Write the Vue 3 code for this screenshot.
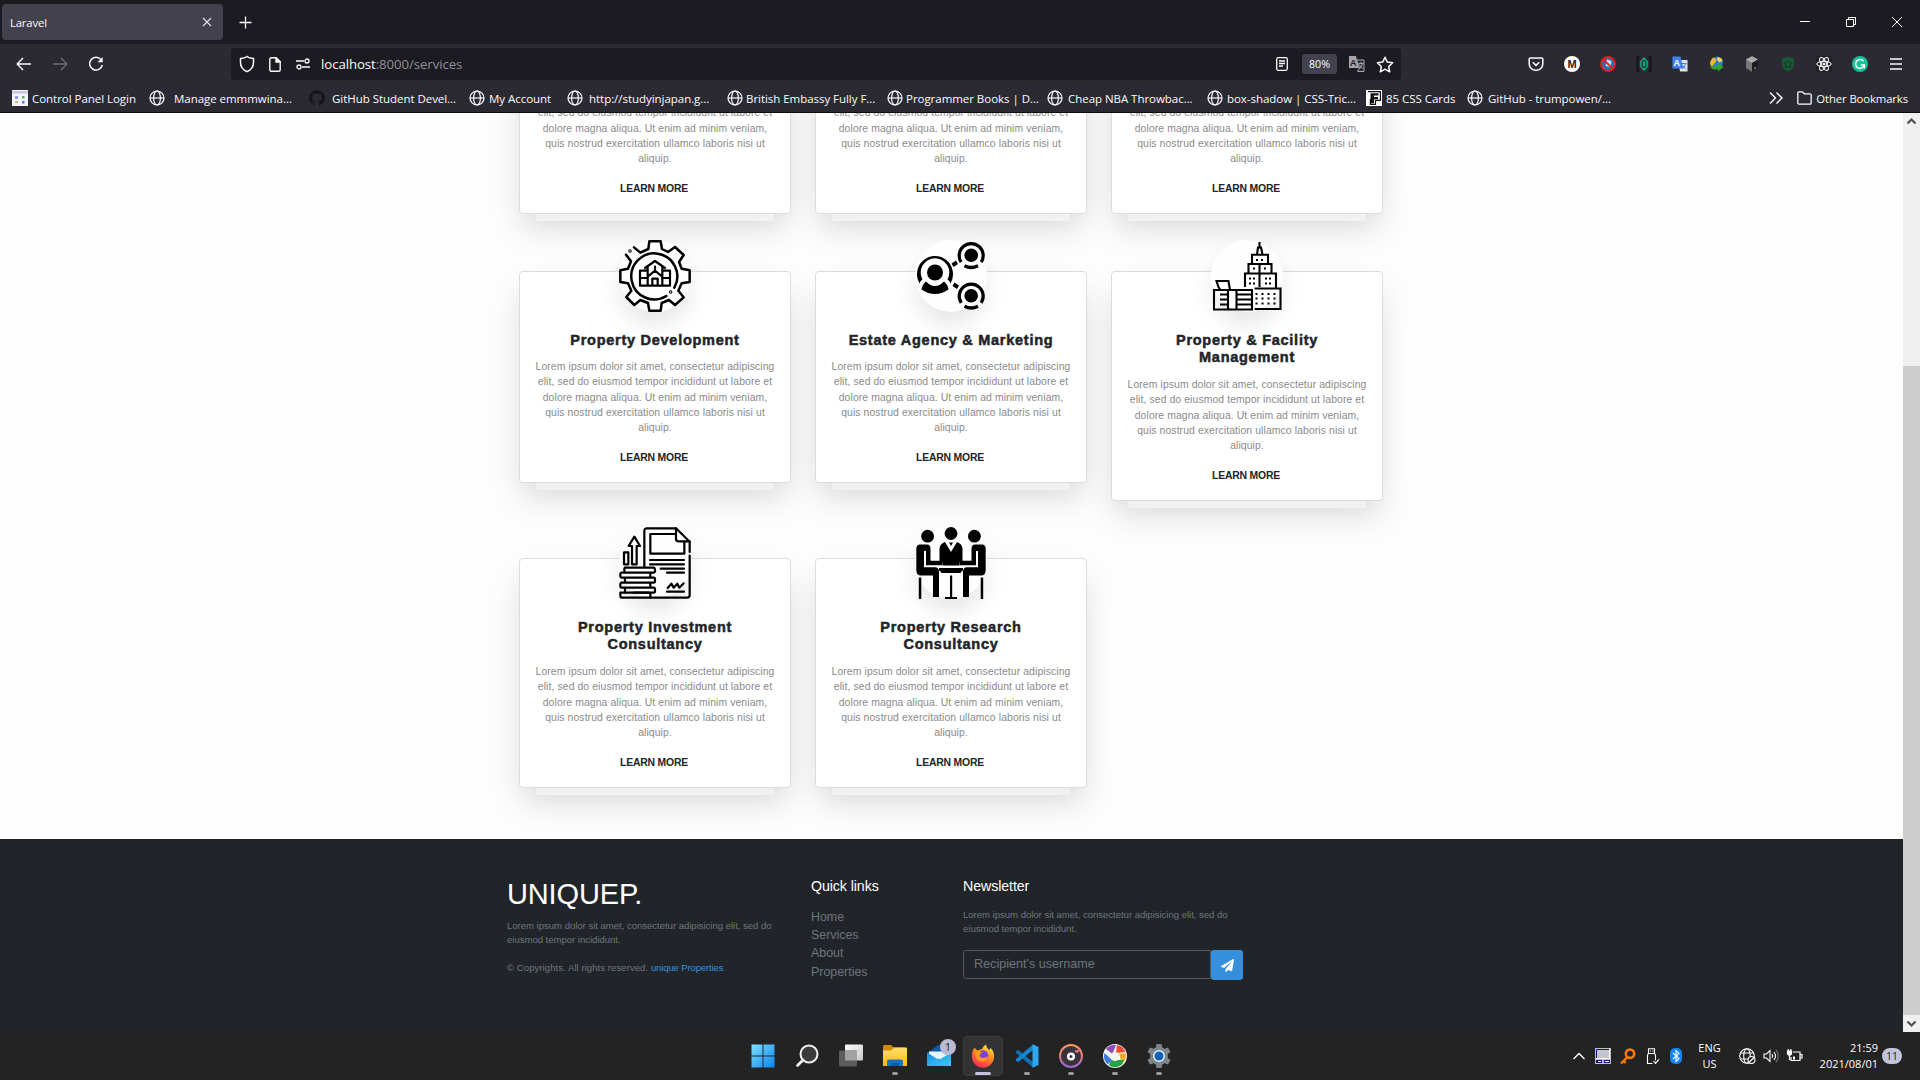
<script setup>
const bookmarks = [
  { icon: 'panel', text: 'Control Panel Login', width: 137, gap: 4 },
  { icon: 'globe', text: 'Manage emmmwina...', width: 160, gap: 9 },
  { icon: 'github', text: 'GitHub Student Devel...', width: 160, gap: 7 },
  { icon: 'globe', text: 'My Account', width: 98, gap: 4 },
  { icon: 'globe', text: 'http://studyinjapan.g...', width: 159.5, gap: 6 },
  { icon: 'globe', text: 'British Embassy Fully F...', width: 160, gap: 3.500 },
  { icon: 'globe', text: 'Programmer Books | D...', width: 160, gap: 3.500 },
  { icon: 'globe', text: 'Cheap NBA Throwbac...', width: 160, gap: 5.500 },
  { icon: 'globe', text: 'box-shadow | CSS-Tric...', width: 159.5, gap: 4.500 },
  { icon: 'cards', text: '85 CSS Cards', width: 101, gap: 4 },
  { icon: 'globe', text: 'GitHub - trumpowen/...', width: 160, gap: 5 },
]
const extensions = ['pocket', 'medium', 'blocked', 'json', 'translate', 'idm', 'cube', 'guard', 'react', 'grammarly', 'menu']
const lorem = ['Lorem ipsum dolor sit amet, consectetur adipiscing', 'elit, sed do eiusmod tempor incididunt ut labore et', 'dolore magna aliqua. Ut enim ad minim veniam,', 'quis nostrud exercitation ullamco laboris nisi ut', 'aliquip.']
const scrolled = lorem.slice(1)
const cards = [
  { title: [], body: scrolled }, { title: [], body: scrolled }, { title: [], body: scrolled },
  { icon: 'gear', title: ['Property Development'], body: lorem },
  { icon: 'network', title: ['Estate Agency & Marketing'], body: lorem },
  { icon: 'building', title: ['Property & Facility', 'Management'], body: lorem },
  { icon: 'invest', title: ['Property Investment', 'Consultancy'], body: lorem },
  { icon: 'meeting', title: ['Property Research', 'Consultancy'], body: lorem },
]
const links = ['Home', 'Services', 'About', 'Properties']
const apps = ['windows', 'search', 'taskview', 'explorer', 'mail', 'firefox', 'vscode', 'disc', 'picasa', 'settings']
const running = ['explorer', 'vscode', 'disc', 'picasa', 'settings']
</script>

<template>
  <div class="screen">
    <svg class="defs" width="0" height="0">
      <defs>
        <linearGradient id="gw" x1="0" y1="0" x2="1" y2="1"><stop offset="0" stop-color="#7fe0ff" /><stop offset="1" stop-color="#0a84f0" /></linearGradient>
        <linearGradient id="gf" x1="0" y1="0" x2="0" y2="1"><stop offset="0" stop-color="#ffdf6b" /><stop offset="1" stop-color="#fdb913" /></linearGradient>
        <linearGradient id="gt" x1="0" y1="0" x2="1" y2="1"><stop offset="0" stop-color="#fff" /><stop offset="1" stop-color="#c8c8c8" /></linearGradient>
        <linearGradient id="gm" x1="0" y1="0" x2="1" y2="1"><stop offset="0" stop-color="#1490df" /><stop offset="1" stop-color="#3fc9f7" /></linearGradient>
        <linearGradient id="gx" x1=".8" y1="0" x2=".3" y2="1"><stop offset="0" stop-color="#fff04a" /><stop offset=".45" stop-color="#ff8a1e" /><stop offset="1" stop-color="#ff2257" /></linearGradient>
        <linearGradient id="gd" x1="0" y1="0" x2="0" y2="1"><stop offset="0" stop-color="#ff9a5c" /><stop offset=".5" stop-color="#e07a80" /><stop offset="1" stop-color="#a066e0" /></linearGradient>
      </defs>
      <symbol id="b-globe" viewBox="0 0 16 16"><g fill="none" stroke="#fbfbfe" stroke-width="1.2"><circle cx="8" cy="8" r="7" /><ellipse cx="8" cy="8" rx="3.4" ry="7" /><path d="M1 8h14" /></g></symbol>
      <symbol id="b-panel" viewBox="0 0 16 16"><path fill="#f4f4fa" d="M0 0h16v16H0z" /><path fill="#c9c4ea" d="M0 1h16v2.600H0z" /><path fill="#8fa3dc" d="M3 6h3v3H3zM4 11h2v2H4z" /><path fill="#55b45a" d="M10 6h2.500v2.500H10z" /><path fill="#f2bf4e" d="M3 11h2v2H3z" /><path fill="#4f83d8" d="M10 11h2.500v2.500H10z" /></symbol>
      <symbol id="b-github" viewBox="0 0 16 16"><path fill="#15141a" d="M8 .2a7.800 7.800 0 0 0-2.500 15.200c.4.100.5-.2.500-.4v-1.500c-2.200.5-2.600-1-2.600-1-.4-.9-.9-1.200-.9-1.200-.7-.5.100-.5.100-.5.800.100 1.200.8 1.200.8.700 1.200 1.800.9 2.300.7 0-.5.300-.9.500-1-1.700-.2-3.600-.9-3.600-3.900 0-.9.300-1.600.8-2.100-.1-.2-.3-1 .1-2.100 0 0 .7-.2 2.100.8a7.500 7.500 0 0 1 4 0c1.500-1 2.100-.8 2.100-.8.400 1.100.2 1.900.100 2.100.5.500.8 1.200.8 2.100 0 3-1.800 3.700-3.600 3.900.3.200.6.700.6 1.400V15c0 .2.100.5.500.4A7.800 7.800 0 0 0 8 .2z" /></symbol>
      <symbol id="b-cards" viewBox="0 0 16 16"><path fill="#fff" d="M0 0h16v16H0z" /><path fill="none" stroke="#111" stroke-width="1.200" d="M2 1.600h12.400v8.800H9.500v4H4.400V9" /><path fill="#111" d="M4.500 3.200h8v2.400H8v1.300h4v2.300H8v4H4.500z" /></symbol>
    </svg>

    <header class="chrome">
      <div class="tabbar">
        <div class="tab"><span class="tab-title">Laravel</span>
          <svg width="10" height="10" viewBox="0 0 10 10"><path d="M1 1l8 8M9 1L1 9" stroke="#e4e4ea" stroke-width="1.100" /></svg>
        </div>
        <svg class="plus" width="13" height="13" viewBox="0 0 13 13"><path d="M6.500 .5v12M.5 6.500h12" stroke="#fbfbfe" stroke-width="1.300" /></svg>
        <div class="wincontrols">
          <svg width="10" height="10"><path d="M0 4.500h10" stroke="#fff" /></svg>
          <svg width="10" height="10" fill="none" stroke="#fff"><path d="M.5 2.500h7v7h-7zM2.500 2.500V.5h7v7h-2" /></svg>
          <svg width="10" height="10"><path d="M0 0l10 10M10 0L0 10" stroke="#fff" /></svg>
        </div>
      </div>

      <div class="nav">
        <div class="history">
          <svg width="16" height="16" viewBox="0 0 16 16" fill="none" stroke="#fbfbfe" stroke-width="1.400"><path d="M15 8H1.500M7 2L1.200 8 7 14" /></svg>
          <svg width="16" height="16" viewBox="0 0 16 16" fill="none" stroke="#6d6c74" stroke-width="1.400"><path d="M1 8h13.500M9 2l5.800 6L9 14" /></svg>
          <svg width="16" height="16" viewBox="0 0 16 16" fill="none" stroke="#fbfbfe" stroke-width="1.500"><path d="M13 3.600A6.400 6.400 0 1 0 14.300 9" /><path d="M14.700 1v5.200H9.500z" fill="#fbfbfe" stroke="none" /></svg>
        </div>
        <div class="urlbar">
          <svg width="16" height="18" viewBox="0 0 16 18" fill="none" stroke="#fbfbfe" stroke-width="1.500"><path d="M8 1.500C6 3.200 3.800 3.400 1.500 3.600v4c0 4.500 3 7.600 6.500 9 3.500-1.400 6.500-4.500 6.500-9v-4C12.200 3.400 10 3.200 8 1.500z" /></svg>
          <svg width="12" height="15" viewBox="0 0 12 15" fill="none" stroke="#fbfbfe" stroke-width="1.400"><path d="M7.200.8H2.300Q.8.8.8 2.300v10.400q0 1.500 1.500 1.500h7.400q1.500 0 1.500-1.500V4.800z" /><path d="M7 .8v4.300h4.300z" fill="#fbfbfe" /></svg>
          <svg width="14" height="12" viewBox="0 0 14 12" fill="none" stroke="#fbfbfe" stroke-width="1.300"><path d="M0 3h8M6 9h8" /><circle cx="11" cy="3" r="2" /><circle cx="3" cy="9" r="2" /></svg>
          <span class="url">localhost<i>:8000/services</i></span>
          <div class="urlactions">
            <svg width="14" height="14" viewBox="0 0 14 14" fill="none" stroke="#fbfbfe" stroke-width="1.300"><rect x="1.700" y=".7" width="10.600" height="12.600" rx="1.500" /><path d="M4 4h6M4 6.500h6M4 9h4" /></svg>
            <span class="zoom">80%</span>
            <svg width="16" height="16" viewBox="0 0 16 16"><path d="M0 0h7l3 12H0z" fill="#a5a4aa" /><path d="M7.500 4H15v11.500H8.500l2-3.500z" fill="#2b2a33" stroke="#a5a4aa" /><text x="1" y="9.500" font-size="9" font-weight="700" fill="#1c1b22" font-family="Liberation Sans, sans-serif">A</text><path d="M9.500 7.500h5M12 6v1.500m1.500 0q-1 3.500-3 5m-.2-4q1 2.500 3.200 4" stroke="#a5a4aa" fill="none" /></svg>
            <svg width="18" height="17" viewBox="0 0 18 17" fill="none" stroke="#fbfbfe" stroke-width="1.500" stroke-linejoin="round"><path d="M9 1.200l2.300 4.900 5.300.700-3.900 3.700 1 5.300L9 13.200l-4.700 2.600 1-5.300L1.400 6.800l5.300-.7z" /></svg>
          </div>
        </div>
        <div class="extensions">
          <div v-for="e in extensions" :key="e" class="ext">
            <svg width="16" height="16" viewBox="0 0 16 16">
              <g v-if="e === 'pocket'" fill="none" stroke="#fbfbfe" stroke-width="1.500"><path d="M2.500 2h11q1.300 0 1.300 1.300V8a6.800 6.300 0 0 1-13.600 0V3.300Q1.200 2 2.500 2z" /><path d="M4.800 6.300L8 9.400l3.200-3.100" /></g>
              <g v-else-if="e === 'medium'"><circle cx="8" cy="8" r="8" fill="#fff" /><text x="8" y="12" text-anchor="middle" font-size="11" font-weight="700" fill="#222" font-family="Liberation Sans, sans-serif">M</text></g>
              <g v-else-if="e === 'blocked'"><circle cx="8" cy="8" r="6.500" fill="#2e6fae" /><path d="M7 3.500l4.500 1.500-1 6-5-1z" fill="#c9e6f7" /><g fill="none" stroke="#f01818" stroke-width="1.900"><circle cx="8" cy="8" r="7" /><path d="M3.300 3.300l9.400 9.400" /></g></g>
              <g v-else-if="e === 'json'"><path d="M3.500 1H1.500v14h2M12.500 1h2v14h-2" fill="none" stroke="#101014" stroke-width="1.500" /><path d="M8 1l3.800 4.500v5L8 15l-3.800-4.500v-5z" fill="#15b789" /><ellipse cx="8" cy="8" rx="1.800" ry="3.600" fill="none" stroke="#14332e" stroke-width="1.400" /></g>
              <g v-else-if="e === 'translate'"><path d="M6 4h9.500v11.500H8z" fill="#dfe3ea" /><path d="M.5.5h8l3 12H.5z" fill="#3f83f0" /><text x="1.500" y="9.500" font-size="9" font-weight="700" fill="#fff" font-family="Liberation Sans, sans-serif">A</text><path d="M9.500 7.500h5M13.500 8q-1 3-3 4.500m0-3l3 3.500" stroke="#4b76c9" fill="none" /></g>
              <g v-else-if="e === 'idm'"><circle cx="9" cy="6.500" r="6" fill="#2f78d0" /><path d="M5 1.500q5 1.500 2.500 4.500T4 11Q-.5 7 5 1.500z" fill="#e7bd2a" /><path d="M10 1q4 .5 4.500 4l-3 1.500-3-3z" fill="#efd44d" /><path d="M2 10q3 1.500 8-1V6.500l5.500 4.500-5.500 4.500V13q-6 2-8-3z" fill="#32a52c" /></g>
              <g v-else-if="e === 'cube'"><path d="M8 .3l6 3.300v8.600L8 15.700 2 12.200V3.600z" fill="#777" /><path d="M8 .3l6 3.300L8 7 2 3.600z" fill="#aaa" /><path d="M8 7l6-3.400v8.600l-6 3.500z" fill="#1c1c1c" /><path d="M10 12.500l2-1" stroke="#bbb" /></g>
              <g v-else-if="e === 'guard'"><path d="M8 .8q3 1.500 6 1.500V8q0 5-6 7.300Q2 13 2 8V2.300q3 0 6-1.500z" fill="#1b5838" /><path d="M8 4l1.200 2.700 2.800.3-2 2 .6 2.900L8 10.500l-2.600 1.400L6 9 4 7l2.800-.3z" fill="none" stroke="#0e3b25" /></g>
              <g v-else-if="e === 'react'" fill="none" stroke="#fff" stroke-width="1"><rect width="16" height="16" rx="2" fill="#202124" stroke="none" /><ellipse cx="8" cy="8" rx="7.200" ry="2.700" /><ellipse cx="8" cy="8" rx="7.200" ry="2.700" transform="rotate(60 8 8)" /><ellipse cx="8" cy="8" rx="7.200" ry="2.700" transform="rotate(120 8 8)" /><circle cx="8" cy="8" r="1" fill="#fff" /></g>
              <g v-else-if="e === 'grammarly'"><circle cx="8" cy="8" r="8" fill="#15c39a" /><path d="M11.500 5.200A4.400 4.400 0 1 0 12.300 9H8.800M12.300 9v3" fill="none" stroke="#fff" stroke-width="1.500" /></g>
              <path v-else d="M2 3h12M2 8h12M2 13h12" stroke="#fbfbfe" stroke-width="1.400" />
            </svg>
          </div>
        </div>
      </div>

      <div class="bookmarks">
        <div v-for="b in bookmarks" :key="b.text" class="bookmark" :style="{ width: b.width + 'px', gap: b.gap + 'px' }">
          <svg width="16" height="16"><use :href="'#b-' + b.icon" /></svg><span>{{ b.text }}</span>
        </div>
        <div class="other">
          <svg width="14" height="12" viewBox="0 0 14 12" fill="none" stroke="#fbfbfe" stroke-width="1.400"><path d="M1 .5L6.500 6 1 11.500M7.500.5L13 6l-5.500 5.500" /></svg>
          <svg class="folder" width="15" height="14" viewBox="0 0 15 14" fill="none" stroke="#fbfbfe" stroke-width="1.300"><path d="M.8 2Q.8.800 2 .8h3.300l2 2H13q1.200 0 1.200 1.200v8q0 1.200-1.200 1.200H2Q.8 13.200.8 12z" /></svg>
          <span>Other Bookmarks</span>
        </div>
      </div>
    </header>

    <div class="viewport">
      <div class="page">
        <main class="grid">
          <article v-for="(c, i) in cards" :key="i" class="card" :class="{ tall: c.title.length > 1 }">
            <div v-if="c.icon" class="badge">
              <svg v-if="c.icon === 'gear'" width="72" height="72" viewBox="0 0 216 216" fill="none" stroke="#000" stroke-width="7.500" stroke-linecap="round" stroke-linejoin="round">
                <path d="M45 22L64 38 88 27 91 4H125L129 27 147 36 168 21 194 45 180 66 188 86 212 91V126L188 130 178 152 194 172 168 195 150 180 128 189 125 212H91L87 189 64 180 46 195 22 171 37 152 27 130 4 126V91L27 86 36 64 21 44" />
                <path d="M166 143A69 69 0 1 0 142 168" /><circle cx="33" cy="33" r="1.500" /><circle cx="155" cy="156" r="1.500" />
                <path d="M63 92h23M130 92h23v45H63V92M63 114h24M129 114h24M78 84L108 63l30 21M86 82v55M130 82v55M90 107l18-15 18 15M100 136v-20h16v20M108 80v8" stroke-width="6.500" />
              </svg>
              <svg v-else-if="c.icon === 'network'" width="72" height="72" viewBox="0 0 72 72">
                <circle cx="20" cy="32.500" r="8" />
                <path d="M4.500 43.500A18 18.200 0 1 1 35.500 43.500Q34.500 40.500 32.500 39.500A14.300 14.300 0 1 0 7.500 39.500Q5.500 40.500 4.500 43.500z" />
                <path d="M11 41.500Q20 50.500 29 41.500Q32.500 44 33.500 49.500Q20 58.500 6.500 49.500Q7.500 44 11 41.500z" />
                <path d="M36.500 23.500l4.500-3 2 3.500-4.500 3zM39.500 42.500l4.500 3-2 3.500-4.500-3z" />
                <g v-for="y in [15.200, 55.800]" :key="y" :transform="`translate(56.2 ${y})`"><circle r="6.800" /><path d="M-10 7A12 12 0 1 1 10 7" fill="none" stroke="#000" stroke-width="3.200" /><path d="M-6 9Q0 12 6 9L7.500 12Q0 16-7.500 12z" /></g>
              </svg>
              <svg v-else-if="c.icon === 'building'" width="72" height="72" viewBox="0 0 72 72" fill="none" stroke="#000" stroke-width="2.100">
                <path d="M48.500 2v6M46 14.500l1-7h3l1.500 7M41 24v-9.300h16V24M37.500 33.300V24h23v9.300M34 47V33.500h31V48M48.500 24v23M43.600 48.500H69.500v20.500H43.600M3 69.500V50H41v19.500zM17 50v19.500M25.500 50v19.500M19 50L17.500 41H5.500l2 6 2 3" />
                <path d="M9 54.500h8M9 59.500h8M9 64.500h8M25 54.500h15M25 59.500h15M25 64.500h15" />
                <path d="M45 20h2m3 0h2M42 28.500h2m9 0h2M38 38.500h2m2 0h2m10 0h2m2 0h2M38 43.500h2m2 0h2m10 0h2m2 0h2M44.500 54h2m4 0h2m4 0h2m4 0h2M44.500 58.500h2m4 0h2m4 0h2m4 0h2M44.500 63.500h2m4 0h2m4 0h2m4 0h2" />
              </svg>
              <svg v-else-if="c.icon === 'invest'" width="72" height="72" viewBox="0 0 216 216" fill="none" stroke="#000" stroke-width="6.600" stroke-linecap="round" stroke-linejoin="round">
                <path d="M76 119V12Q76 4 84 4H171L212 44V75M212 86V204Q212 212 204 212H8Q4 212 4 206V197H90" />
                <path d="M171 4V36Q171 43 179 43H212M168 21H94V80H196V46M93 99H195M93 112H195M125 125H195M144 137H195M146 183L157 170 164 182 175 170 181 182 194 169M144 194H195" />
                <path d="M18 122H102Q108 122 108 128V133Q108 137 102 137H20Q16 137 16 132V127Q16 122 20 122M8 137H94M8 137Q4 137 4 143V148Q4 152 8 152H104Q108 152 108 157V162Q108 167 104 167H8Q4 167 4 173V177Q4 182 8 182H104Q108 182 108 188V192Q108 197 104 197H44M18 152V167M18 182V197M94 137V152M94 167V182M94 197V212" />
                <path d="M15 112V76H28V112zM39 112V57H29L46 29 63 57H53V112z" />
              </svg>
              <svg v-else width="72" height="72" viewBox="0 0 72 72">
                <circle cx="12.600" cy="9.200" r="6.400" /><circle cx="36" cy="6.500" r="6.400" /><circle cx="59.400" cy="9.200" r="6.400" />
                <path d="M30 15L36 25 42 15Q47.500 17 47.500 22V34H45L44.500 38.500H27.500L27 34H24.500V22Q24.500 17 30 15zM34 15.500h4L36 19z" />
                <g id="seat"><path d="M5 17.500H12Q15.500 17.500 15.500 22V33.700H27V38.300H11V24H9V40.300H20Q24 40.300 24 45V70H18V48.500H6Q1.300 48.500 1.300 43V22Q1.300 17.500 5 17.500zM3.800 50.500h2.500V72H3.800z" /></g>
                <use href="#seat" transform="translate(72 0) scale(-1 1)" />
                <path d="M24 41H48V43.500Q46 44 45.500 46H26.500Q26 44 24 43.500zM35 48.500h2.200V70H42v2H30v-2h5z" />
              </svg>
            </div>
            <h4 v-if="c.title.length"><span v-for="t in c.title" :key="t">{{ t }}</span></h4>
            <p><span v-for="l in c.body" :key="l">{{ l }}</span></p>
            <a class="more">LEARN MORE</a>
          </article>
        </main>

        <footer>
          <section class="brand">
            <h2>UNIQUEP.</h2>
            <p>Lorem ipsum dolor sit amet, consectetur adipisicing elit, sed do<br>eiusmod tempor incididunt.</p>
            <p class="copy">© Copyrights. All rights reserved. <a>unique Properties</a></p>
          </section>
          <section class="quick">
            <h5>Quick links</h5>
            <ul><li v-for="l in links" :key="l">{{ l }}</li></ul>
          </section>
          <section class="news">
            <h5>Newsletter</h5>
            <p>Lorem ipsum dolor sit amet, consectetur adipisicing elit, sed do<br>eiusmod tempor incididunt.</p>
            <div class="field">
              <div class="input">Recipient's username</div>
              <div class="send"><svg width="13" height="13" viewBox="0 0 512 512"><path fill="#fff" d="M476 3L12 271c-18 10-16 35 2 43l106 45L408 105c5-5 13 2 8 8L175 407v80c0 24 28 33 42 16l64-77 125 52c14 6 30-3 33-18L511 28c3-20-18-34-35-25z" /></svg></div>
            </div>
          </section>
        </footer>
      </div>
      <div class="scrollbar">
        <svg width="17" height="17"><path d="M4.500 10.500l4-4 4 4" fill="none" stroke="#505050" stroke-width="2.200" /></svg>
        <div class="thumb"></div>
        <svg width="17" height="17"><path d="M4.500 6.500l4 4 4-4" fill="none" stroke="#505050" stroke-width="2.200" /></svg>
      </div>
    </div>

    <div class="taskbar">
      <div class="apps">
        <div v-for="a in apps" :key="a" class="app" :class="{ active: a === 'firefox', running: running.includes(a) }">
          <svg width="24" height="24" viewBox="0 0 24 24">
            <path v-if="a === 'windows'" fill="url(#gw)" d="M.5.500h11v11H.5zM12.500.500h11v11h-11zM.5 12.500h11v11H.5zM12.500 12.500h11v11h-11z" />
            <g v-else-if="a === 'search'" fill="none" stroke="#f2f2f2"><circle cx="14" cy="10" r="8.500" stroke-width="2" fill="#3b3b3b" /><path d="M8 16l-5.500 5.500" stroke-width="2.800" stroke-linecap="round" /></g>
            <g v-else-if="a === 'taskview'"><rect x="6" y="0.500" width="18" height="16" rx="1" fill="url(#gt)" /><rect x="0" y="6.500" width="18" height="16" rx="1" fill="#5c5c5c" /><path d="M6 6.500h12v10H6z" fill="#a2a2a2" /></g>
            <g v-else-if="a === 'explorer'"><path d="M0 2.500Q0 1 1.500 1H8l3 2.500h11v4H0z" fill="#d18b00" /><path d="M0 6.500h8l3-3h12q1 0 1 1V22H0z" fill="url(#gf)" /><path d="M4 22v-4.500q0-2 2-2h12q2 0 2 2V22z" fill="#1473c8" /><path d="M8 19h8v3H8z" fill="#0f5aa5" /></g>
            <g v-else-if="a === 'mail'"><path d="M0 9L12 .5 24 9v4H0z" fill="#0f59a8" /><path d="M2 7.500h20v8H2z" fill="#e8f3fa" /><path d="M0 8.500l12 7.500 12-7.500V22H0z" fill="url(#gm)" /><path d="M0 22l12-8 12 8z" fill="#35b8f0" opacity=".6" /></g>
            <g v-else-if="a === 'firefox'"><path d="M3.500 3.500l2.500 3Q9 5.500 11 5q1-3 4-4.500 0 3 3 5.500 2-1 1-2.500 4.500 4 4 9A11 11 0 0 1 1 13Q.5 9 2 6z" fill="url(#gx)" /><circle cx="12" cy="11.500" r="5.200" fill="#7d3fe0" /><path d="M4 8q4-2 8 1-3-.5-3.500 2Q9 14 12 14q3 0 4.500-2 0 5-5 5.500Q3.500 17.500 4 8z" fill="#ff9a25" /></g>
            <g v-else-if="a === 'vscode'"><path d="M1 7.500l2-1.700L18 18v5.500L1 9z" fill="#0f6fb5" /><path d="M1 16.500l2 1.700L18 6V.500L1 15z" fill="#1683cf" /><path d="M17.500.300L23.500 3v18l-6 2.700z" fill="#2fa5f0" /></g>
            <g v-else-if="a === 'disc'"><circle cx="12" cy="12" r="11" fill="#37343a" stroke="url(#gd)" stroke-width="2" /><path d="M16 6.500l2 1.500 3-3" fill="none" stroke="#e07a80" stroke-width="1.800" /><circle cx="12" cy="12.500" r="4" fill="#fff" /><circle cx="12" cy="12.500" r="1.500" fill="#37343a" /></g>
            <g v-else-if="a === 'picasa'"><circle cx="12" cy="12" r="12" fill="#f2f2f2" /><path d="M3 5A11 11 0 0 1 13 1L9.500 10z" fill="#8a4db8" /><path d="M14 1a11 11 0 0 1 8.500 7L13 9z" fill="#ef4a35" /><path d="M23 9.500a11 11 0 0 1-4 10L16 9.500z" fill="#f5ab1e" /><path d="M19 20.500a11 11 0 0 1-13 1L8 16h13z" fill="#27a243" /><path d="M5 20.500A11 11 0 0 1 1.500 9l7.500 7z" fill="#3c7be0" /><circle cx="12" cy="12.500" r="4.500" fill="#f4f4f4" /></g>
            <g v-else><path d="M9.500 0h5l.7 3.500 2.300 1.300L21 3.600l2.500 4.300L20.800 10v4l2.700 2.100-2.500 4.300-3.500-1.200-2.300 1.300-.7 3.500h-5l-.7-3.500-2.300-1.300L3 20.400.5 16.100 3.200 14v-4L.5 7.900 3 3.600l3.500 1.200 2.300-1.300z" fill="#7d868e" /><circle cx="12" cy="12" r="6" fill="#e6eef5" /><circle cx="12" cy="12" r="4.500" fill="#0f62b4" /></g>
          </svg>
          <span v-if="a === 'mail'" class="count">1</span>
        </div>
      </div>
      <div class="tray">
        <svg width="14" height="14" class="up" viewBox="0 0 14 14"><path d="M1.500 10L7 4.500 12.500 10" fill="none" stroke="#fff" stroke-width="1.300" /></svg>
        <svg width="16" height="16" viewBox="0 0 16 16"><path d="M0 0h16v16H0z" fill="#c0c0c0" /><path d="M1.500 1.500h13v9h-13z" fill="#c6c6c6" stroke="#14147a" /><path d="M14.500 1v10M1 10.500h14" stroke="#fff" /><path d="M1 12h6v3H1zM9 12h6v3H9z" fill="#14147a" /><path d="M3 13.500h3M10 13.500h4" stroke="#fff" /></svg>
        <svg width="16" height="16" viewBox="0 0 16 16"><circle cx="10" cy="5.700" r="4.200" fill="none" stroke="#ff7a00" stroke-width="2.600" /><path d="M7.500 9L1 15.500M3 12l2.500 3" stroke="#ff7a00" stroke-width="2.400" /></svg>
        <svg width="14" height="17" viewBox="0 0 14 17" fill="none" stroke="#fff" stroke-width="1.100"><path d="M2.500 5.500V.700h6v4.800M6.500 15.500h-5v-8q0-2 2-2h4q2 0 2 2v5M4 3h1m1.500 0h1M7.500 13l2 2.300 3.500-4" /></svg>
        <svg width="12" height="16" viewBox="0 0 12 16"><rect width="12" height="16" rx="5" fill="#0a84ff" /><path d="M3 5l6 5.500L6 13.500v-11L9 5.500 3 11" fill="none" stroke="#fff" stroke-width="1.100" /></svg>
        <div class="lang"><span>ENG</span><span>US</span></div>
        <svg width="17" height="16" viewBox="0 0 17 16" fill="none" stroke="#fff" stroke-width="1.100"><circle cx="8" cy="8" r="7.300" /><ellipse cx="8" cy="8" rx="3.300" ry="7.300" /><path d="M1.500 5h13M1.500 11h8" /><circle cx="12.500" cy="12" r="3.500" fill="#252526" /><path d="M10 14.500l5-5" /></svg>
        <svg width="16" height="14" viewBox="0 0 16 14" fill="none" stroke="#fff" stroke-width="1.100"><path d="M1 5h2.500L7 1.500v11L3.500 9H1zM9 5q1.500 2 0 4M11 3q3 4 0 8" /><path d="M13 1q4.500 6 0 12" stroke="#777" /></svg>
        <svg width="17" height="14" viewBox="0 0 17 14" fill="none" stroke="#fff" stroke-width="1.200"><path d="M7 3h7v8.500H5V8M14.500 5.500H16v3.500h-1.500" /><path d="M1.500 2h4v3q-2 2-4 0zM2.200 0v2M4.800 0v2" fill="#fff" /><path d="M3.500 6v5" /><path d="M7 9h2" stroke-width="3" /></svg>
        <div class="clock"><span>21:59</span><span>2021/08/01</span></div>
        <span class="notes">11</span>
      </div>
    </div>
  </div>
</template>

<style>
html, body { margin: 0; overflow: hidden; }
</style>

<style scoped>
* { box-sizing: border-box; }
svg { display: block; flex: none; }
.screen { width: 1920px; height: 1080px; display: flex; flex-direction: column; font-family: "Open Sans", "Noto Sans", sans-serif; overflow: hidden; }
.defs { position: absolute; }
.chrome { height: 113px; background: #2b2a33; border-bottom: 1px solid #0c0c0d; color: #fbfbfe; flex: none; }
.tabbar { height: 44px; background: #1c1b22; display: flex; align-items: center; padding-left: 2px; }
.tab { width: 221px; height: 36px; border-radius: 4px; background: #42414d; display: flex; align-items: center; justify-content: space-between; padding: 0 11px 0 8px; font-size: 11.300px; }
.tab-title { letter-spacing: -.15px; }
.plus { margin-left: 16px; }
.wincontrols { margin-left: auto; display: flex; gap: 36px; padding-right: 18px; }
.nav { height: 40px; display: flex; align-items: center; }
.history { width: 231px; display: flex; gap: 20px; padding-left: 16px; }
.urlbar { width: 1170px; height: 32px; background: #1c1b22; border-radius: 4px; display: flex; align-items: center; padding: 0 7px 0 8px; }
.urlbar > svg:nth-child(2) { margin-left: 14px; }
.urlbar > svg:nth-child(3) { margin-left: 15px; }
.url { margin-left: 11px; font-size: 13.200px; letter-spacing: -.06px; }
.url i { font-style: normal; color: #8f8f95; }
.urlactions { margin-left: auto; display: flex; align-items: center; }
.zoom { width: 35px; height: 20px; line-height: 20px; background: #42414d; border-radius: 3px; font-size: 10.700px; letter-spacing: -.1px; text-align: center; margin: 0 12px 0 13px; }
.urlactions > svg:last-child { margin-left: 11px; }
.extensions { margin-left: 117px; display: flex; }
.ext { width: 36px; display: flex; justify-content: center; }
.bookmarks { height: 28px; display: flex; align-items: center; padding-left: 12px; font-size: 11.500px; letter-spacing: -.04px; white-space: nowrap; }
.bookmark { display: flex; align-items: center; flex: none; }
.other { margin-left: auto; display: flex; align-items: center; padding-right: 12px; font-size: 11.300px; letter-spacing: -.1px; }
.folder { margin: 0 4px 0 14px; }

.viewport { height: 919px; display: flex; overflow: hidden; flex: none; }
.page { width: 1903px; background: #fdfdfd; font-family: "Liberation Sans", Arial, sans-serif; display: flex; flex-direction: column; }
.grid { width: 864px; height: 837px; margin: -111px 0 0 519px; display: grid; grid-template-columns: repeat(3, 272px); gap: 57px 24px; align-items: start; align-content: start; flex: none; }
.card { position: relative; min-height: 212px; background: #fff; border: 1px solid #dcdcdc; border-radius: 4px; padding: 0 0 17px; display: flex; flex-direction: column; justify-content: flex-end; align-items: center; text-align: center; box-shadow: 0 17px 30px -5px rgba(0, 0, 0, .16); }
.card.tall { min-height: 230px; }
.card::after { content: ""; position: absolute; left: 16px; right: 16px; bottom: -8px; height: 7px; background: #f1f1f1; }
.badge { position: absolute; top: -32px; left: 99px; width: 72px; height: 72px; border-radius: 50%; background: #fefefe; box-shadow: 0 13px 26px -3px rgba(0, 0, 0, .12); }
.card h4 { margin: 0 0 10px; font-size: 14.500px; line-height: 17px; font-weight: 700; letter-spacing: .73px; color: #212529; -webkit-text-stroke: .5px #212529; }
.card.tall h4 { margin-bottom: 11px; }
.card h4 span, .card p span { display: block; white-space: nowrap; }
.card p { margin: 0 0 14.500px; font-size: 10.400px; line-height: 15.300px; letter-spacing: .1px; color: #8a8a8a; }
.more { font-size: 10.400px; line-height: 15px; font-weight: 700; letter-spacing: -.2px; color: #212529; padding-right: 2px; }

footer { flex: 1; background: #212529; display: flex; padding-left: 507px; color: #6c757d; }
footer p { margin: 0; font-size: 9.600px; line-height: 14px; letter-spacing: -.04px; white-space: nowrap; }
h2 { margin: 38px 0 0; font-size: 29px; line-height: 34px; font-weight: 400; color: #fff; letter-spacing: -.15px; }
.brand { width: 304px; }
.brand p { margin-top: 8px; }
.brand .copy { margin-top: 14px; letter-spacing: .04px; }
.copy a { color: #3490dc; letter-spacing: -.16px; }
h5 { margin: 39px 0 0; font-size: 14.200px; line-height: 17px; font-weight: 400; color: #fff; letter-spacing: -.08px; }
.quick { width: 152px; }
ul { list-style: none; margin: 13px 0 0; padding: 0; font-size: 12.400px; line-height: 18.200px; }
.news p { margin-top: 13px; }
.field { display: flex; margin-top: 14px; }
.input { width: 248px; height: 29px; border: 1px solid #55585c; border-radius: 3px 0 0 3px; padding-left: 10px; font-size: 12.600px; line-height: 26px; }
.send { width: 32px; height: 30px; background: #3490dc; border-radius: 3px; display: flex; align-items: center; justify-content: center; }
.scrollbar { width: 17px; background: #f0f0f0; display: flex; flex-direction: column; }
.thumb { margin-top: 236px; height: 649px; background: #cdcdcd; }

.taskbar { height: 48px; background: #232324; display: flex; color: #fff; position: relative; }
.apps { margin-left: 741px; display: flex; align-items: center; }
.app { position: relative; width: 40px; height: 40px; margin: 0 2px; border-radius: 4px; display: flex; justify-content: center; padding-top: 8px; }
.app.active { background: #333335; border: 1px solid #3d3d3f; padding-top: 7px; }
.app.running::after, .app.active::after { content: ""; position: absolute; bottom: 1px; left: 17px; width: 6px; height: 3px; border-radius: 2px; background: #9b9b9b; }
.app.active::after { left: 11px; bottom: 0; width: 16px; background: #c3c3dd; }
.count { position: absolute; left: 21px; top: 3px; width: 16px; height: 16px; border-radius: 50%; background: #babad4; color: #222; font-size: 11px; line-height: 16px; text-align: center; }
.tray { margin-left: auto; display: flex; align-items: center; padding-right: 18px; }
.tray > svg { margin-right: 9px; }
.tray > svg:nth-child(3) { margin-right: 10px; }
.tray > svg:nth-child(4) { margin-right: 10px; }
.tray > svg:nth-child(5) { margin-right: 15px; }
.lang, .clock { display: flex; flex-direction: column; font-size: 11px; line-height: 16px; }
.lang { width: 25px; align-items: center; margin-right: 17px; }
.tray > svg:nth-child(7), .tray > svg:nth-child(8) { margin-right: 7px; }
.clock { width: 66px; align-items: flex-end; letter-spacing: 0; }
.notes { margin-left: 4px; width: 20px; height: 16px; border-radius: 8px; background: #c3c3dd; color: #222; font-size: 10.500px; line-height: 16px; text-align: center; }
</style>
